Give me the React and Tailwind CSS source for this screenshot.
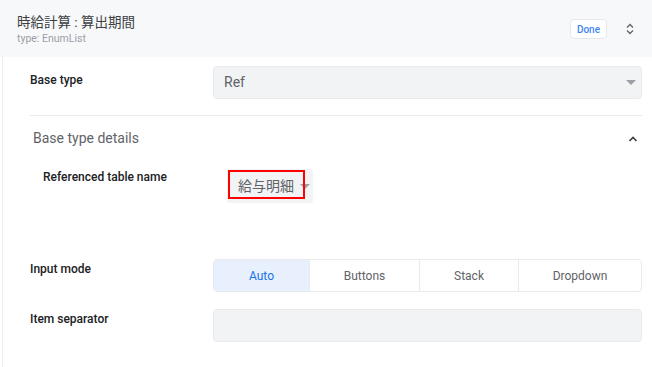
import React from "react";

const Caret = () => (
  <svg width="10" height="6" viewBox="0 0 10 6"><path d="M0 0 L10 0 L5 5 Z" fill="#9aa0a6" /></svg>
);

export default function App() {
  return (
    <div className="w-[652px] h-[367px] bg-white overflow-hidden relative" style={{ fontFamily: "Roboto, 'Noto Sans CJK JP', sans-serif" }}>
      <div className="h-[57px] bg-[#f7f8fa] flex items-center pl-[17px] pr-[17px]">
        <div className="flex flex-col flex-1 pt-[1px]">
          <div className="text-[13.5px] text-[#3c4043] leading-[20px]">時給計算 : 算出期間</div>
          <div className="text-[10.5px] text-[#9aa0a6] leading-[14px]">type: EnumList</div>
        </div>
        <div className="h-[20px] px-[6px] mt-[1px] bg-white border border-[#e6e8eb] rounded-[4px] text-[10px] font-medium text-[#4285f4] flex items-center">Done</div>
        <div className="ml-[18px] mt-[1px] w-[10px] flex justify-center">
          <svg width="8" height="12" viewBox="0 0 8 12" fill="none" stroke="#5f6368" strokeWidth="1.3"><path d="M1 4.5 L4 1.5 L7 4.5" /><path d="M1 7.5 L4 10.5 L7 7.5" /></svg>
        </div>
      </div>
      <div className="absolute left-[2px] top-[57px] bottom-0 w-px bg-[#eceef0]" />
      <div className="pl-[30px] pr-[10px]">
        <div className="flex pt-[9px]">
          <div className="w-[183px] text-[12px] font-medium text-[#202124] pt-[5px]">Base type</div>
          <div className="flex-1 h-[33px] bg-[#f1f3f4] border border-[#e8eaed] rounded-[4px] flex items-center pl-[10px] pr-[5px] text-[14px] text-[#5f6368]">
            <span className="flex-1">Ref</span>
            <Caret />
          </div>
        </div>
        <div className="mt-[16px] h-px bg-[#e8eaed]" />
        <div className="flex items-center mt-[12px] pl-[3px] pr-[4px]">
          <div className="flex-1 text-[14px] text-[#5f6368]">Base type details</div>
          <svg width="10" height="6" viewBox="0 0 10 6" fill="none" stroke="#3c4043" strokeWidth="1.6"><path d="M1.5 5 L5 1.5 L8.5 5" /></svg>
        </div>
        <div className="flex mt-[20px] pl-[13px]">
          <div className="w-[184px] text-[12px] font-medium text-[#202124] -mt-[1px]">Referenced table name</div>
          <div className="h-[34px] w-[86px] bg-[#f1f3f4] rounded-[3px] relative flex items-center pl-[11px] text-[14px] text-[#5f6368]">
            <span>給与明細</span>
            <span className="ml-[6px] mt-[2px]"><Caret /></span>
            <div className="absolute left-[1px] top-[1px] w-[77px] h-[29px] border-2 border-[#ff0000]" />
          </div>
        </div>
        <div className="flex mt-[56px]">
          <div className="w-[183px] text-[12px] font-medium text-[#202124] pt-[1px]">Input mode</div>
          <div className="flex-1 h-[33px] border border-[#e8eaed] rounded-[4px] flex text-[12px] text-[#5f6368] overflow-hidden">
            <div className="w-[95px] bg-[#e8f0fe] text-[#1a73e8] flex items-center justify-center">Auto</div>
            <div className="w-[110px] border-l border-[#e8eaed] flex items-center justify-center">Buttons</div>
            <div className="w-[99px] border-l border-[#e8eaed] flex items-center justify-center">Stack</div>
            <div className="flex-1 border-l border-[#e8eaed] flex items-center justify-center">Dropdown</div>
          </div>
        </div>
        <div className="flex mt-[17px]">
          <div className="w-[183px] text-[12px] font-medium text-[#202124] pt-[1px]">Item separator</div>
          <div className="flex-1 h-[33px] bg-[#f1f3f4] border border-[#e8eaed] rounded-[4px]" />
        </div>
      </div>
    </div>
  );
}
